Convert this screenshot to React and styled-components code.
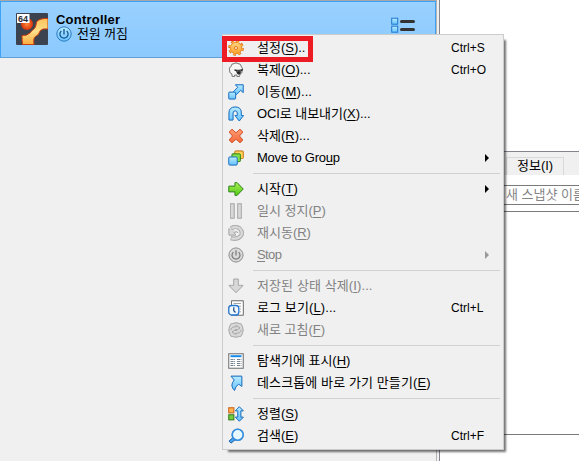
import React from "react";
import styled, { createGlobalStyle, css } from "styled-components";

const Global = createGlobalStyle`
  *, *::before, *::after { box-sizing: border-box; }
  body {
    margin: 0;
    background: #fff;
    overflow: hidden;
    font: 400 13px/16px "Liberation Sans", "Noto Sans CJK KR", sans-serif;
    color: #000;
  }
`;

const Window = styled.div`
  position: relative;
  display: grid;
  grid-template-columns: 437px 2px 140px;
  width: 581px;
  height: 461px;
  overflow: hidden;
  background: #fff;
`;

const MachineList = styled.aside`
  background: #f0f0f0;
  border-top: 1px solid #a8a8a8;
  border-right: 1px solid #b4b4b4;
`;

const Splitter = styled.div`
  background: #f0f0f0;
`;

const MachineRow = styled.div`
  display: flex;
  align-items: flex-start;
  height: 57px;
  padding: 11px 20px 0 15px;
  border: 1px solid #3fa3f5;
  border-bottom-color: #5d9fd6;
  background: linear-gradient(#99d1ff, #8bc9fe);
`;

const MachineInfo = styled.div`
  display: flex;
  flex-direction: column;
  flex: 1;
  margin: -1px 0 0 8px;
`;

const MachineName = styled.strong`
  font-size: 13px;
  font-weight: 700;
  line-height: 15px;
  letter-spacing: 0.22px;
`;

const MachineState = styled.div`
  display: flex;
  align-items: center;
  height: 16px;
  gap: 5px;
  margin-top: -1px;
  letter-spacing: -0.1px;
`;

const ListIcon = styled.svg`
  display: block;
  margin-top: 3px;
`;

const Details = styled.main`
  display: flex;
  flex-direction: column;
  overflow: hidden;
  border-left: 1px solid #85858f;
`;

const Preview = styled.section`
  height: 151px;
  background: #fff;
`;

const TabBar = styled.div`
  display: flex;
  align-items: flex-end;
  height: 24px;
  padding-left: 66px;
  border-top: 1px solid #85858f;
  background: #f0f0f0;
`;

const Tab = styled.div`
  width: 58px;
  height: 18px;
  padding-left: 10px;
  border: 1px solid #d9d9d9;
  border-bottom: 0;
  line-height: 16px;
  white-space: nowrap;
`;

const SnapshotField = styled.div`
  height: 20px;
  margin-top: 10px;
  padding-left: 66px;
  border: 1px solid #7a7a7a;
  border-width: 1px 0;
  color: #858585;
  line-height: 18px;
  white-space: nowrap;
`;

const SnapshotTree = styled.div`
  height: 224px;
  margin-top: 6px;
  border: 1px solid #7a7a7a;
  border-width: 1px 0;
`;

const Menu = styled.nav`
  position: absolute;
  left: 222px;
  top: 34px;
  width: 282px;
  padding: 2px 3px;
  border: 1px solid #ccc;
  background: #f0f0f0;
  box-shadow: 4px 4px 2px -2px rgba(0, 0, 0, 0.55);
`;

const MenuItem = styled.div`
  display: grid;
  grid-template-columns: 18px 1fr 33px 16px;
  align-items: center;
  height: 22px;
  padding-left: 2px;
  white-space: nowrap;
  ${(p) => p.$disabled && css`color: #828282;`}
`;

const Label = styled.span`
  padding-left: 11px;
  letter-spacing: ${(p) => p.$spacing}px;
`;

const Mnemonic = styled.u`
  text-decoration-thickness: 1px;
  text-underline-offset: 2px;
`;

const Shortcut = styled.span`
  font-size: 12px;
`;

const Arrow = styled.i`
  grid-column: 4;
  justify-self: start;
  margin-left: 1px;
  border: 4px solid transparent;
  border-left-color: ${(p) => (p.$disabled ? "#999" : "#000")};
  border-right: 0;
`;

const Divider = styled.hr`
  height: 1px;
  margin: 4px 0 4px 27px;
  border: 0;
  background: #d0d0d0;
`;

const Highlight = styled.div`
  position: absolute;
  left: 222px;
  top: 36px;
  width: 91px;
  height: 26px;
  border: 5px solid #ed1c24;
`;

const IconSvg = styled.svg`
  display: block;
  width: 17px;
  height: 17px;
  filter: drop-shadow(0.5px 0.5px 0.3px rgba(0, 0, 0, 0.3));
`;

const blue = { fill: "url(#sky)", stroke: "#1f78cc", strokeWidth: 1 };
const grey = { fill: "#d8d8d8", stroke: "#b0b0b0", strokeWidth: 1 };

const drawings = {
  gear: (
    <>
      <circle cx="8" cy="8" r="6.6" fill="none" stroke="#e87b1c" strokeWidth="2.4" strokeDasharray="2.8 2.384" />
      <circle cx="8" cy="8" r="5.7" fill="url(#amber)" stroke="#ed8a23" />
      <circle cx="8" cy="8" r="6.4" fill="none" stroke="#ffb647" strokeWidth="1.2" strokeDasharray="2 3.027" strokeDashoffset="-.4" />
      <circle cx="8" cy="8" r="1.5" fill="#fff1cf" stroke="#e07a20" />
    </>
  ),
  sheep: (
    <>
      <path d="M3 4.5Q3.2 1.8 6 1.6 8 .2 10 1.6q3 0 3.2 2.8Q15 6 14 8.5q.5 3-2 3.5l-.6 2.5H9V13H6.5v1.5H4.3l-.5-2.8Q1 11 1.6 8 .6 6 3 4.5z" fill="#f7f7f7" stroke="#7d7d7d" />
      <path d="M6.5 7.3l2.2.5h3l2.8-.9.7 1.2-2 1.2-.8 2.4-1.8 1-1.5-1-1-2.5-1.8-.6z" fill="#292929" />
      <path d="M9.3 9h1m1.4 0h1" stroke="#ddd" strokeWidth=".8" />
    </>
  ),
  move: (
    <>
      <path d="M7.5.8h7.7v7.7l-2.4-2.2-4.3 4.2-3-3 4.3-4.2z" {...blue} />
      <rect x=".8" y="8.2" width="6.8" height="6.8" rx=".6" {...blue} />
    </>
  ),
  uturn: (
    <path d="M1 14V7Q1 1 7.2 1T13.3 7v2.5h2.2L11.3 15 7 9.5h2.3V7q0-2.2-2.1-2.2T5 7v7z" {...blue} />
  ),
  cross: (
    <path d="M4 1.2l4 3.6 4-3.6L14.9 4l-3.5 4 3.5 4-2.9 2.8-4-3.6-4 3.6L1.1 12l3.5-4-3.5-4z" fill="url(#red)" stroke="#d65a35" />
  ),
  group: (
    <>
      <rect x="6.8" y="1" width="8.5" height="7.5" rx="1" fill="#ffd158" stroke="#d07f19" />
      <rect x="4" y="3.8" width="8.4" height="7.8" rx="1" fill="#83dc48" stroke="#31881b" />
      <rect x=".8" y="7" width="8.4" height="8" rx="1" {...blue} />
    </>
  ),
  start: (
    <path d="M.8 5.2H7V1.6h2l6.2 6.4L9 14.4H7v-3.6H.8z" fill="url(#green)" stroke="#37901d" />
  ),
  pause: (
    <>
      <rect x="2.5" y=".9" width="3.6" height="14.2" {...grey} />
      <rect x="9.7" y=".9" width="3.6" height="14.2" {...grey} />
    </>
  ),
  reset: (
    <>
      <path d="M3 3.3Q8 .8 11.6 3.4 15 6.4 13.3 10.4 10.5 14.8 2.8 13.3" fill="none" stroke="#b0b0b0" strokeWidth="4" />
      <path d="M3.5 3Q8 1 11.6 3.4 15 6.4 13.3 10.4 10.5 14.6 3.4 13.3" fill="none" stroke="#dadada" strokeWidth="2.2" />
      <path d="M1 3.4L1 10h7L5.9 7.8Q8.5 5.6 10.2 7.8" {...grey} />
    </>
  ),
  power: (
    <>
      <circle cx="8" cy="8" r="7" fill="#dadada" stroke="#9b9b9b" />
      <path d="M5.4 5.1a4 4 0 1 0 5.2 0M8 3.2v5.3" fill="none" stroke="#777" strokeWidth="1.2" />
    </>
  ),
  discard: <path d="M5.7 1.2h4.6v6.2H15l-7 7.2-7-7.2h4.7z" {...grey} />,
  log: (
    <>
      <path d="M3.5.8h11.8v14.4H3.5z" fill="#fff" stroke="#747474" />
      <path d="M5.5 3.5h7.5M10 6.2h3M11.5 9h1.5M11.5 11.8h1.5" stroke="#a3a3a3" />
      <rect x=".8" y="5.5" width="10" height="9.5" rx="3" fill="#f1f8ff" stroke="#2778d2" strokeWidth="1.3" />
      <path d="M5.8 7.2v3.5l1.7 1.8" fill="none" stroke="#174679" strokeWidth="1.2" />
    </>
  ),
  refresh: (
    <>
      <path d="M3 1.8Q8 0 13 1.8 17 8 13 14.2 8 16 3 14.2-1 8 3 1.8z" {...grey} />
      <path d="M3 8q.5-3.5 5.300-3.300V3.500L12 6 8.500 8.500V7M13 8q-.5 3.500-5.300 3.300v1.200L4 10l3.500-2.500V9" fill="none" stroke="#a0a0a0" strokeWidth=".9" />
    </>
  ),
  explorer: (
    <>
      <rect x=".8" y=".8" width="14.4" height="14.4" fill="#fff" stroke="#777" />
      <path d="M2.5 3.2h11" stroke="#1688e8" strokeWidth="2" />
      <path d="M2.5 6.5H7m2 0h4.5M2.5 8.5H7m2 0h4.5M2.5 10.5H7m2 0h4.5M2.5 12.5H7m2 0h4.5" stroke="#667582" strokeWidth=".9" strokeDasharray="3 .6" />
    </>
  ),
  shortcut: (
    <path d="M3 1.2h10.8v10.2l-3-2.2Q7.2 11 6.5 15.5 1.5 10.5 6.3 5z" {...blue} />
  ),
  sort: (
    <>
      <rect x=".8" y="1.8" width="5" height="5" fill="#ffb34c" stroke="#d46a1d" />
      <rect x=".8" y="8.8" width="5" height="5" fill="#75cd3e" stroke="#36861b" />
      <path d="M11.3.8l4 4h-2.5v6.4h2.5l-4 4-4-4h2.5V4.8H7.3z" {...blue} />
    </>
  ),
  search: (
    <>
      <path d="M4.8 9.8l2.2 2-4 3.3-2-2z" fill="#4ba5ec" stroke="#1c69b9" />
      <circle cx="9.7" cy="6.7" r="5.5" fill="#e8f8ff" stroke="#318ee1" strokeWidth="1.6" />
    </>
  ),
};

function Icon({ name }) {
  return <IconSvg viewBox="0 0 17 17">{drawings[name]}</IconSvg>;
}

const groups = [
  [
    { icon: "gear", text: "설정", mnemonic: "S", end: ")..", shortcut: "Ctrl+S" },
    { icon: "sheep", text: "복제", mnemonic: "O", end: ")...", shortcut: "Ctrl+O" },
    { icon: "move", text: "이동", mnemonic: "M", end: ")...", spacing: 0.1 },
    { icon: "uturn", text: "OCI로 내보내기", mnemonic: "X", end: ")...", spacing: -0.08 },
    { icon: "cross", text: "삭제", mnemonic: "R", end: ")..." },
    { icon: "group", lead: "Move to Gro", mnemonic: "u", end: "p", arrow: true, spacing: -0.25 },
  ],
  [
    { icon: "start", text: "시작", mnemonic: "T", end: ")", arrow: true, spacing: 0.1 },
    { icon: "pause", text: "일시 정지", mnemonic: "P", end: ")", disabled: true },
    { icon: "reset", text: "재시동", mnemonic: "R", end: ")", disabled: true },
    { icon: "power", lead: "", mnemonic: "S", end: "top", disabled: true, arrow: true, spacing: -0.6 },
  ],
  [
    { icon: "discard", text: "저장된 상태 삭제", mnemonic: "I", end: ")...", disabled: true, spacing: 0.1 },
    { icon: "log", text: "로그 보기", mnemonic: "L", end: ")...", shortcut: "Ctrl+L", spacing: 0.1 },
    { icon: "refresh", text: "새로 고침", mnemonic: "F", end: ")", disabled: true },
  ],
  [
    { icon: "explorer", text: "탐색기에 표시", mnemonic: "H", end: ")" },
    { icon: "shortcut", text: "데스크톱에 바로 가기 만들기", mnemonic: "E", end: ")", spacing: 0.11 },
  ],
  [
    { icon: "sort", text: "정렬", mnemonic: "S", end: ")" },
    { icon: "search", text: "검색", mnemonic: "E", end: ")", shortcut: "Ctrl+F" },
  ],
];

function Item({ icon, text, lead, mnemonic, end, shortcut, arrow, disabled, spacing = 0 }) {
  return (
    <MenuItem $disabled={disabled}>
      <Icon name={icon} />
      <Label $spacing={spacing}>
        {lead ?? `${text}(`}
        <Mnemonic>{mnemonic}</Mnemonic>
        {end}
      </Label>
      {shortcut && <Shortcut>{shortcut}</Shortcut>}
      {arrow && <Arrow $disabled={disabled} />}
    </MenuItem>
  );
}

function Gradients() {
  return (
    <defs>
      <linearGradient id="sky" x2="0" y2="1"><stop stopColor="#b9ebff" /><stop offset="1" stopColor="#66c2ff" /></linearGradient>
      <linearGradient id="amber" x2="0" y2="1"><stop stopColor="#ffd581" /><stop offset="1" stopColor="#f9a02c" /></linearGradient>
      <linearGradient id="red" x2="0" y2="1"><stop stopColor="#ff9b72" /><stop offset="1" stopColor="#f2683a" /></linearGradient>
      <linearGradient id="green" x2="0" y2="1"><stop stopColor="#a8ed54" /><stop offset="1" stopColor="#55cb16" /></linearGradient>
      <linearGradient id="bone" x2="0" y2="1"><stop stopColor="#ffc35a" /><stop offset=".5" stopColor="#ffe08a" /><stop offset="1" stopColor="#f9aa3d" /></linearGradient>
      <radialGradient id="ball"><stop stopColor="#ff8b3a" /><stop offset="1" stopColor="#d9340b" /></radialGradient>
    </defs>
  );
}

export default function App() {
  return (
    <>
      <Global />
      <Window>
        <MachineList>
          <MachineRow>
            <svg width="32" height="32" viewBox="0 0 32 32">
              <Gradients />
              <rect width="32" height="32" rx="1" fill="#3b4250" />
              <circle cx="11" cy="11" r="6" fill="url(#ball)" />
              <path d="M32 5.5V16q-6-1-8 2-1 4-4.5 5.5Q17 25 18 31.5H6.5Q6 27 6 22.5q5 .5 8-2.5 2-3 4.5-4.5Q20 14 20.5 9q3-4 11.5-3.5z" fill="url(#bone)" stroke="#c9400c" />
              <rect x="1" y="1" width="12.5" height="9" fill="#fff" />
              <text x="2" y="9" fontFamily="Liberation Sans" fontWeight="bold" fontSize="9" fill="#252b36">64</text>
            </svg>
            <MachineInfo>
              <MachineName>Controller</MachineName>
              <MachineState>
                <svg width="16" height="16" viewBox="0 0 16 16">
                  <circle cx="8" cy="8" r="7.2" fill="url(#sky)" stroke="#2a79be" />
                  <path d="M5.3 5a4.1 4.1 0 1 0 5.4 0M8 3v5.5" fill="none" stroke="#155393" strokeWidth="1.3" />
                </svg>
                전원 꺼짐
              </MachineState>
            </MachineInfo>
            <ListIcon width="24" height="18" viewBox="0 0 24 18">
              <rect x=".7" y="2.2" width="6" height="6" {...blue} />
              <rect x=".7" y="10.2" width="6" height="6" {...blue} />
              <path d="M10.5 5.5h12m-12 8h12" stroke="#333" strokeWidth="3" strokeLinecap="round" />
            </ListIcon>
          </MachineRow>
        </MachineList>
        <Splitter />
        <Details>
          <Preview />
          <TabBar><Tab>정보(I)</Tab></TabBar>
          <SnapshotField>새 스냅샷 이름</SnapshotField>
          <SnapshotTree />
        </Details>
        <Menu>
          {groups.map((items, i) => (
            <React.Fragment key={i}>
              {i > 0 && <Divider />}
              {items.map((item) => <Item key={item.icon} {...item} />)}
            </React.Fragment>
          ))}
        </Menu>
        <Highlight />
      </Window>
    </>
  );
}
